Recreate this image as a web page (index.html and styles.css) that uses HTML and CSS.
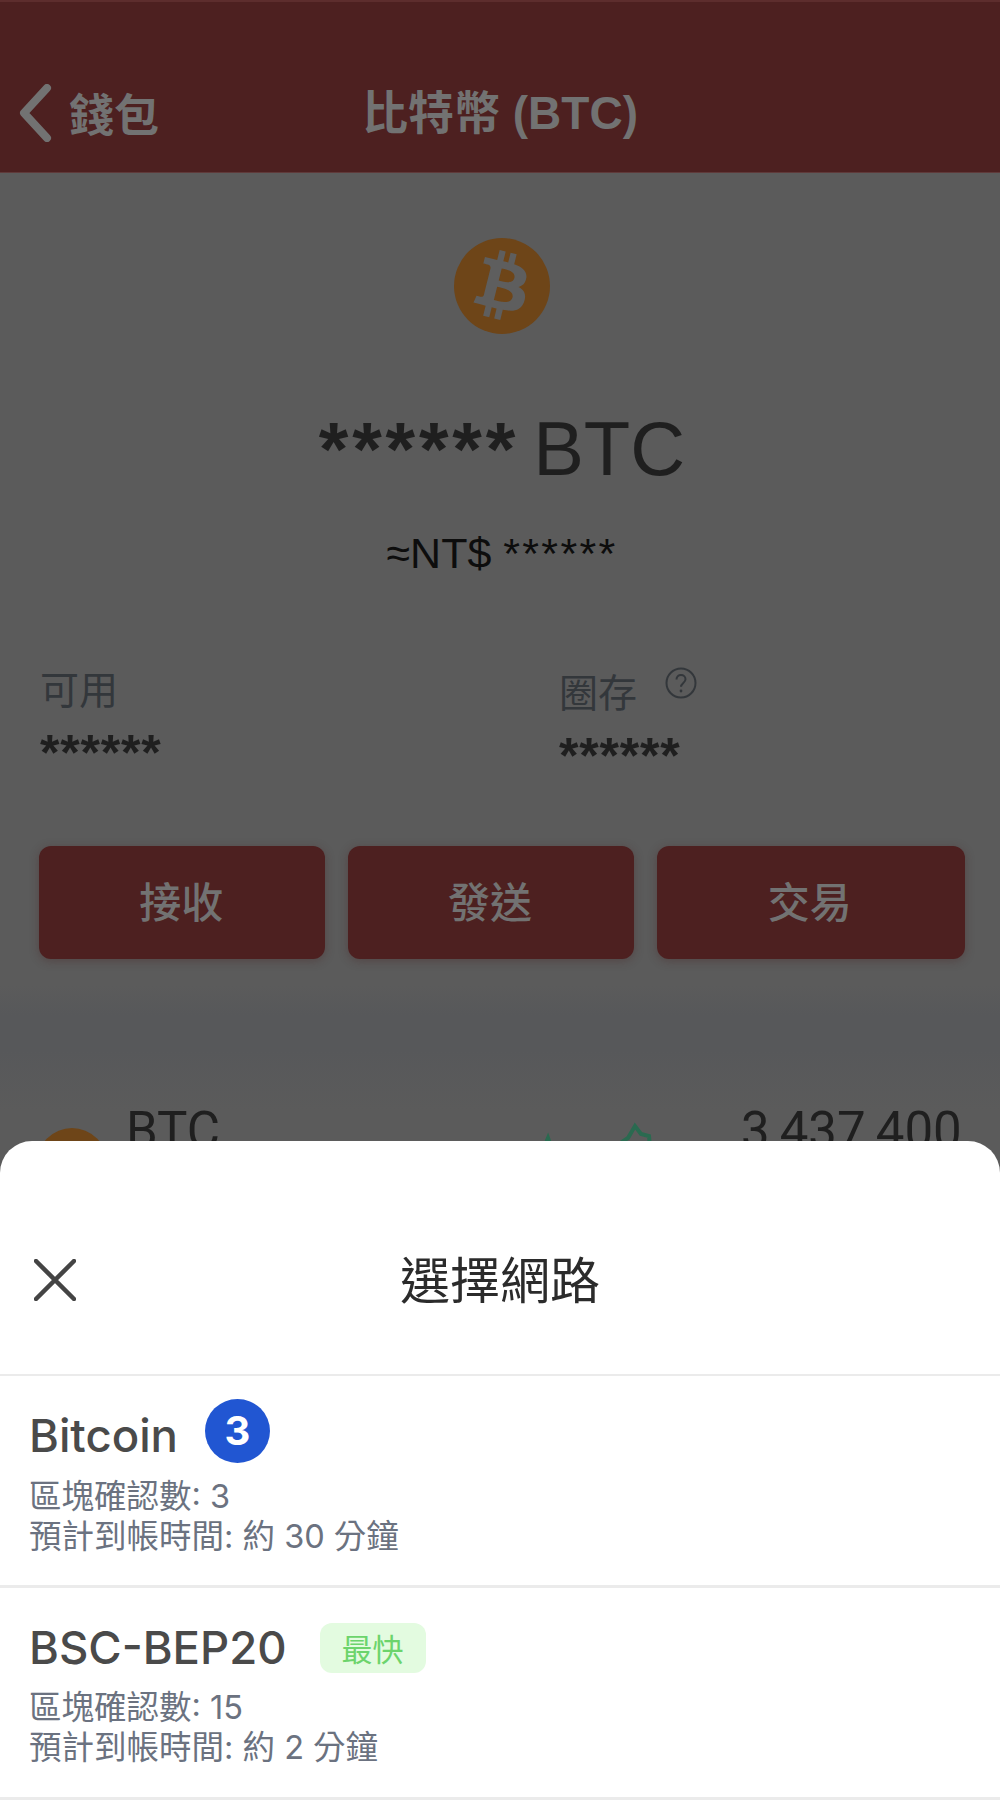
FILE: index.html
```html
<!DOCTYPE html>
<html lang="zh-Hant">
<head>
<meta charset="utf-8">
<title>比特幣 (BTC)</title>
<link rel="stylesheet" href="styles.css">
</head>
<body>
<div class="wallet">
  <header class="topbar">
    <div class="back">
      <svg class="chevron" viewBox="0 0 34 58" aria-hidden="true"><path d="M29 4 6 29l23 25"/></svg>
      <span>錢包</span>
    </div>
    <h1 class="topbar-title">比特幣 (BTC)</h1>
    <div></div>
  </header>

  <section class="summary">
    <svg class="coin" viewBox="0 0 24 24" aria-hidden="true">
      <circle class="coin-disc" cx="12" cy="12" r="12"/>
      <path class="coin-mark" transform="translate(12 12) scale(1.15) translate(-12 -12)" d="M17.288 10.291c.24-1.59-.974-2.45-2.64-3.03l.54-2.153-1.315-.33-.525 2.107c-.345-.087-.705-.167-1.064-.25l.526-2.127-1.32-.33-.54 2.165c-.285-.067-.565-.132-.84-.2l-1.815-.45-.35 1.407s.975.225.955.236c.535.136.63.486.615.766l-1.477 5.92c-.075.166-.24.406-.614.314.015.02-.96-.24-.96-.24l-.66 1.51 1.71.426.93.242-.54 2.19 1.32.327.54-2.17c.36.1.705.19 1.05.273l-.51 2.154 1.32.33.545-2.19c2.24.427 3.93.257 4.64-1.774.57-1.637-.03-2.58-1.217-3.196.854-.193 1.5-.76 1.68-1.93h.01zm-3.01 4.22c-.404 1.64-3.157.75-4.05.53l.72-2.9c.896.23 3.757.67 3.33 2.37zm.41-4.24c-.37 1.49-2.662.735-3.405.55l.654-2.64c.744.18 3.137.524 2.75 2.084v.006z"/>
    </svg>
    <div class="amount"><span class="amount-mask">******</span> BTC</div>
    <div class="fiat">≈NT$ <span class="fiat-mask">******</span></div>
  </section>

  <section class="balances">
    <div class="balance">
      <div class="balance-label">可用</div>
      <div class="stars">******</div>
    </div>
    <div class="balance balance-locked">
      <div class="balance-label">圈存
        <svg class="help" viewBox="0 0 32 32" aria-hidden="true"><circle cx="16" cy="16" r="14.5"/><path d="M11.5 12.5c0-2.8 2-4.5 4.5-4.5s4.5 1.7 4.5 4.2c0 3.6-4.5 3.8-4.5 7.6"/><circle class="help-dot" cx="16" cy="24" r="1.4"/></svg>
      </div>
      <div class="stars">******</div>
    </div>
  </section>

  <div class="actions">
    <button class="action">接收</button>
    <button class="action">發送</button>
    <button class="action">交易</button>
  </div>

  <div class="market-row">
    <span class="market-coin"></span>
    <span class="market-name">BTC</span>
    <svg class="spark" viewBox="0 0 130 40" aria-hidden="true"><path d="M0 40 14 40 23 18 31 40 62 40 94 40 97 22 103 18 110 6 116 14 124 16 126 40"/></svg>
    <span class="market-price">3,437,400</span>
  </div>
</div>

<section class="sheet">
  <div class="sheet-head">
    <svg class="close" viewBox="0 0 42 42" aria-hidden="true"><path d="M2 2l38 38M40 2 2 40"/></svg>
    <h2 class="sheet-title">選擇網路</h2>
  </div>

  <div class="network">
    <div class="network-name">
      <span>Bitcoin</span>
      <span class="step">3</span>
    </div>
    <p class="network-meta">區塊確認數: 3<br>預計到帳時間: 約 30 分鐘</p>
  </div>

  <div class="network network-fast">
    <div class="network-name">
      <span>BSC-BEP20</span>
      <span class="tag">最快</span>
    </div>
    <p class="network-meta">區塊確認數: 15<br>預計到帳時間: 約 2 分鐘</p>
  </div>
</section>
</body>
</html>
```

FILE: styles.css
```css
* { box-sizing: border-box; }

html, body {
  margin: 0;
  height: 1800px;
  overflow: hidden;
}

body {
  background: #5b5b5b;
  font-family: "Liberation Sans", "Noto Sans CJK TC", sans-serif;
}

.wallet {
  height: 1141px;
  overflow: hidden;
  background: linear-gradient(#5b5b5b 985px, #57585a 1015px, #57585a 1050px, #5b5b5b 1110px);
}

.topbar {
  height: 173px;
  padding: 82px 0 0 18px;
  background: #4d2020;
  border-top: 2px solid #5d2d2d;
  border-bottom: 1px solid #5f3a3a;
  display: grid;
  grid-template-columns: 1fr auto 1fr;
  align-items: start;
  color: #727272;
}

.back {
  display: flex;
  align-items: center;
  gap: 17px;
  font: 700 45px/58px "Noto Sans CJK TC", sans-serif;
}

.chevron {
  width: 34px;
  height: 58px;
  fill: none;
  stroke: #727272;
  stroke-width: 8;
  stroke-linecap: round;
  stroke-linejoin: round;
}

.topbar-title {
  margin: 0 0 0 -18px;
  font: 700 46px/58px "Liberation Sans", "Noto Sans CJK TC", sans-serif;
}

.summary {
  display: flex;
  flex-direction: column;
  align-items: center;
  padding: 65px 0 0 4px;
}

.coin {
  width: 96px;
  height: 96px;
  display: block;
}

.coin-disc { fill: #6e4518; }
.coin-mark { fill: #5e5e5e; }

.amount {
  margin-top: 73px;
  font-size: 76px;
  line-height: 84px;
  color: #1f1f1f;
}

.amount-mask {
  margin-right: -7px;
  font-weight: 700;
  letter-spacing: 3.8px;
}

.fiat {
  margin-top: 39px;
  font-size: 43px;
  line-height: 46px;
  color: #0d0d0d;
}

.fiat-mask { letter-spacing: 2.3px; }

.balances {
  display: grid;
  grid-template-columns: 519px 1fr;
  padding: 88px 40px 0;
  color: #2a2a2a;
}

.balance-label {
  display: flex;
  align-items: flex-start;
  gap: 28px;
  font: 400 39px/46px "Noto Sans CJK TC", sans-serif;
  color: #33373b;
}

.balance-locked .balance-label { padding-top: 3px; }

.help {
  width: 32px;
  height: 32px;
  fill: none;
  stroke: #33373b;
  stroke-width: 2;
}

.help-dot { fill: #33373b; stroke: none; }

.stars {
  margin-top: 20px;
  font-size: 50px;
  font-weight: 700;
  line-height: 46px;
  letter-spacing: .8px;
  color: #1f1f1f;
}

.actions {
  display: grid;
  grid-template-columns: 286fr 285fr 308fr;
  gap: 23px;
  padding: 0 35px 0 39px;
  margin-top: 67px;
}

.action {
  height: 113px;
  padding: 0 2px 6px 0;
  border: 0;
  border-radius: 12px;
  background: #4d2020;
  color: #727272;
  font: 500 42px/1 "Noto Sans CJK TC", sans-serif;
  box-shadow: 0 2px 10px rgba(70, 30, 30, .35);
}

.market-row {
  display: grid;
  grid-template-columns: 70px 1fr 130px 219px;
  column-gap: 19px;
  align-items: start;
  margin-top: 147px;
  padding: 0 40px 0 37px;
}

.market-coin {
  width: 70px;
  height: 70px;
  margin-top: 22px;
  border-radius: 50%;
  background: #6e4518;
}

.market-name, .market-price {
  font-family: Roboto, sans-serif;
  font-size: 51px;
  line-height: 50px;
  color: #1f1f1f;
}

.spark {
  width: 130px;
  height: 40px;
  margin: 14px 0 0 -67px;
  fill: none;
  stroke: #2a6a50;
  stroke-width: 4;
}

.sheet {
  height: 659px;
  background: #fff;
  border-radius: 32px 32px 0 0;
}

.sheet-head {
  height: 235px;
  padding-top: 118px;
  display: grid;
  grid-template-columns: 1fr;
  justify-items: center;
  border-bottom: 2px solid #ebebeb;
}

.close {
  grid-area: 1 / 1;
  justify-self: start;
  width: 42px;
  height: 42px;
  margin-left: 34px;
  fill: none;
  stroke: #444;
  stroke-width: 4.5;
  stroke-linecap: round;
}

.sheet-title {
  grid-area: 1 / 1;
  margin: -12px 0 0;
  font: 400 50px/60px "Noto Sans CJK TC", sans-serif;
  color: #2b2b2b;
}

.network {
  height: 212px;
  padding: 28px 29px 0;
  border-bottom: 3px solid #ebebeb;
}

.network-name {
  display: flex;
  align-items: center;
  gap: 27px;
  height: 64px;
  font: 500 45.5px/64px Inter, "Noto Sans CJK TC", sans-serif;
  color: #4a4a4a;
}

.step {
  width: 65px;
  height: 64px;
  margin-top: -11px;
  border-radius: 50%;
  background: #2156d2;
  color: #fff;
  font: 700 40px/64px Inter, sans-serif;
  text-align: center;
}

.network-fast { padding-top: 35px; }

.network-fast .network-name { gap: 33px; height: 50px; }

.tag {
  width: 106px;
  height: 50px;
  border-radius: 12px;
  background: #e3fbe0;
  color: #6cd46c;
  font: 400 31px/50px "Noto Sans CJK TC", sans-serif;
  text-align: center;
}

.network-meta {
  margin: 9px 0 0;
  font: 400 32.5px/40px Inter, "Noto Sans CJK TC", sans-serif;
  color: #6b7280;
}

.network-fast .network-meta { margin-top: 15px; }
```
